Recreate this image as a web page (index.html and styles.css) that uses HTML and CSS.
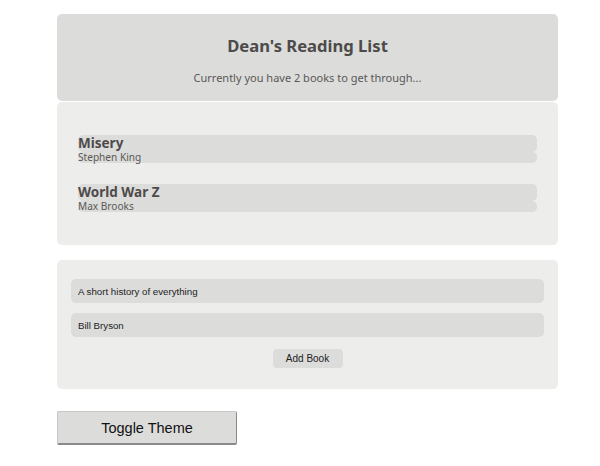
FILE: index.html
```html
<!DOCTYPE html>
<html>
<head>
<meta charset="utf-8">
<link rel="stylesheet" href="styles.css">
</head>
<body>
<div class="app">
  <header class="card header">
    <h1 class="title">Dean's Reading List</h1>
    <p class="subtitle">Currently you have 2 books to get through...</p>
  </header>
  <section class="card books">
    <div class="book">
      <h2 class="book-title">Misery</h2>
      <p class="book-author">Stephen King</p>
    </div>
    <div class="book">
      <h2 class="book-title">World War Z</h2>
      <p class="book-author">Max Brooks</p>
    </div>
  </section>
  <form class="card form">
    <input class="field" type="text" value="A short history of everything">
    <input class="field" type="text" value="Bill Bryson">
    <button class="add" type="button">Add Book</button>
  </form>
  <button class="toggle" type="button">Toggle Theme</button>
</div>
</body>
</html>
```
FILE: styles.css
```css
html, body {
  margin: 0;
  padding: 0;
  background: #ffffff;
}
body {
  font-family: "Noto Sans", "Open Sans", sans-serif;
  color: #4a4a4a;
}
.app {
  width: 501px;
  margin-left: 57px;
  padding-top: 14px;
}
.card {
  border-radius: 5px;
}
.header {
  background: #dcdcdb;
  height: 87px;
  box-sizing: border-box;
  padding-top: 22px;
  text-align: center;
}
.title {
  margin: 0;
  font-size: 16.6px;
  line-height: 20px;
  font-weight: 700;
  color: #4d4b4a;
}
.subtitle {
  margin: 14px 0 0;
  font-size: 11px;
  line-height: 16px;
  color: #5a5856;
}
.books {
  margin-top: 1px;
  background: #ededec;
  height: 143px;
  box-sizing: border-box;
  padding: 33px 21px 0;
  display: flex;
  flex-direction: column;
  gap: 21px;
}
.book-title {
  margin: 0;
  background: #dcdcdb;
  border-radius: 5px;
  font-size: 13.5px;
  line-height: 17px;
  font-weight: 700;
  color: #4d4b4a;
}
.book-author {
  margin: 0;
  background: #dcdcdb;
  border-radius: 5px;
  font-size: 10.1px;
  line-height: 11px;
  color: #5a5856;
}
.form {
  margin: 15px 0 0;
  background: #ededec;
  height: 129px;
  box-sizing: border-box;
  padding: 19px 14px 0;
  display: flex;
  flex-direction: column;
  align-items: center;
}
.field {
  width: 100%;
  height: 24px;
  box-sizing: border-box;
  border: none;
  border-radius: 5px;
  background: #dcdcdb;
  padding: 0 7px;
  font-family: "Liberation Sans", Arial, sans-serif;
  font-size: 9.7px;
  color: #222;
  margin-bottom: 10px;
  outline: none;
}
.add {
  margin-top: 2px;
  width: 70px;
  height: 19px;
  border: none;
  border-radius: 4px;
  background: #dcdcdb;
  font-family: "Liberation Sans", Arial, sans-serif;
  font-size: 10px;
  color: #222;
  padding: 0;
}
.toggle {
  margin-top: 22px;
  width: 180px;
  height: 34px;
  background: #dcdcdb;
  border: 1px solid #c8c8c8;
  border-right-color: #8a8a8a;
  border-bottom: 2px solid #8a8a8a;
  border-radius: 2px;
  font-family: "Liberation Sans", Arial, sans-serif;
  font-size: 14.5px;
  color: #111;
  padding: 0;
}
```
